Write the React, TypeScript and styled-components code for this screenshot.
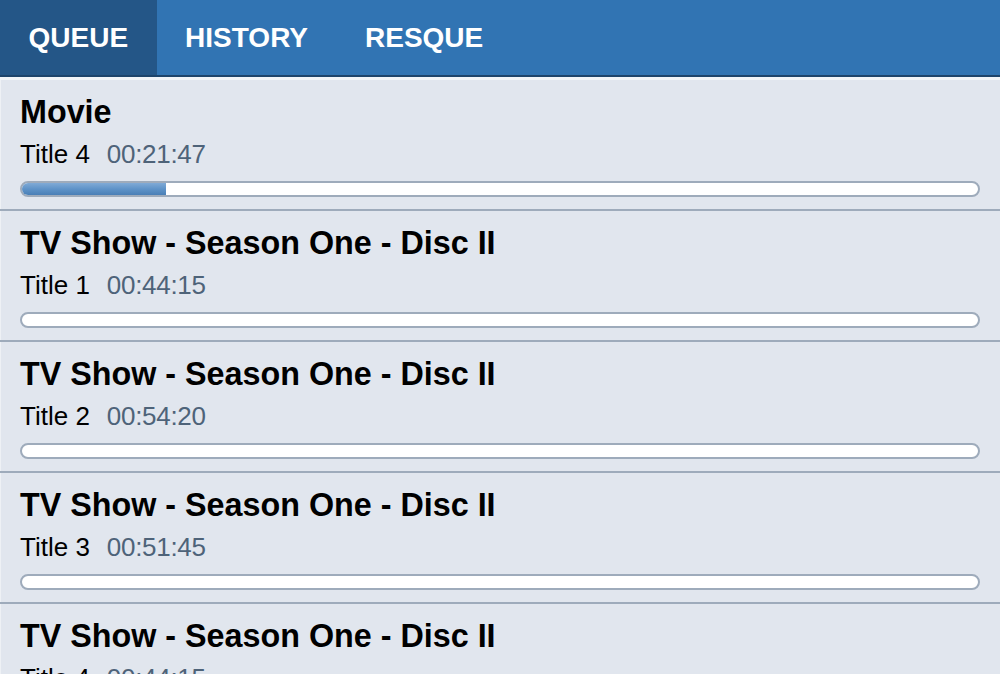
import React from "react";
import styled, { createGlobalStyle } from "styled-components";

const Global = createGlobalStyle`
  html, body { margin: 0; padding: 0; background: #e1e6ee; }
  body { font-family: "Liberation Sans", Arial, Helvetica, sans-serif; overflow: hidden; }
  * { box-sizing: border-box; }
`;

const Page = styled.div`
  width: 1000px;
  height: 674px;
  overflow: hidden;
  background: #e1e6ee;
  display: flex;
  flex-direction: column;
`;

const TabBar = styled.nav`
  display: flex;
  height: 80px;
  flex-shrink: 0;
  background: #3174b3;
  border-bottom: 3px solid #f1f4f8;
  box-shadow: inset 0 -2px 0 #1d446b;
`;

const Tab = styled.div<{ $active?: boolean }>`
  height: 75px;
  line-height: 75px;
  padding: 0 28.5px;
  font-size: 28px;
  font-weight: 700;
  color: #ffffff;
  background: ${(p) => (p.$active ? "#245687" : "transparent")};
`;

const List = styled.div`
  display: flex;
  flex-direction: column;
  box-shadow: inset 1px 0 0 #eef1f5;
`;

const Row = styled.div`
  padding: 14px 20px 12px;
  border-bottom: 2px solid #9eabbb;
  flex-shrink: 0;
`;

const Title = styled.div`
  font-size: 32.3px;
  line-height: 36px;
  font-weight: 700;
  color: #000;
`;

const Sub = styled.div`
  margin-top: 9px;
  font-size: 26px;
  line-height: 30px;
  color: #000;
  display: flex;
  gap: 17px;
`;

const Time = styled.span`
  color: #4e6379;
  letter-spacing: -0.3px;
`;

const Bar = styled.div`
  margin-top: 12px;
  height: 16px;
  border: 2px solid #9eabbb;
  border-radius: 8px;
  background: #ffffff;
  overflow: hidden;
`;

const Fill = styled.div`
  height: 100%;
  background: linear-gradient(to bottom, #80aad6 0%, #5f93c8 50%, #4a7fb6 100%);
`;

const items = [
  { name: "Movie", title: "Title 4", time: "00:21:47", progress: 15.1 },
  { name: "TV Show - Season One - Disc II", title: "Title 1", time: "00:44:15", progress: 0 },
  { name: "TV Show - Season One - Disc II", title: "Title 2", time: "00:54:20", progress: 0 },
  { name: "TV Show - Season One - Disc II", title: "Title 3", time: "00:51:45", progress: 0 },
  { name: "TV Show - Season One - Disc II", title: "Title 4", time: "00:44:15", progress: 0 },
];

export default function App() {
  return (
    <Page>
      <Global />
      <TabBar>
        <Tab $active>QUEUE</Tab>
        <Tab>HISTORY</Tab>
        <Tab>RESQUE</Tab>
      </TabBar>
      <List>
        {items.map((it, i) => (
          <Row key={i}>
            <Title>{it.name}</Title>
            <Sub>
              <span>{it.title}</span>
              <Time>{it.time}</Time>
            </Sub>
            <Bar>
              <Fill style={{ width: `${it.progress}%` }} />
            </Bar>
          </Row>
        ))}
      </List>
    </Page>
  );
}
